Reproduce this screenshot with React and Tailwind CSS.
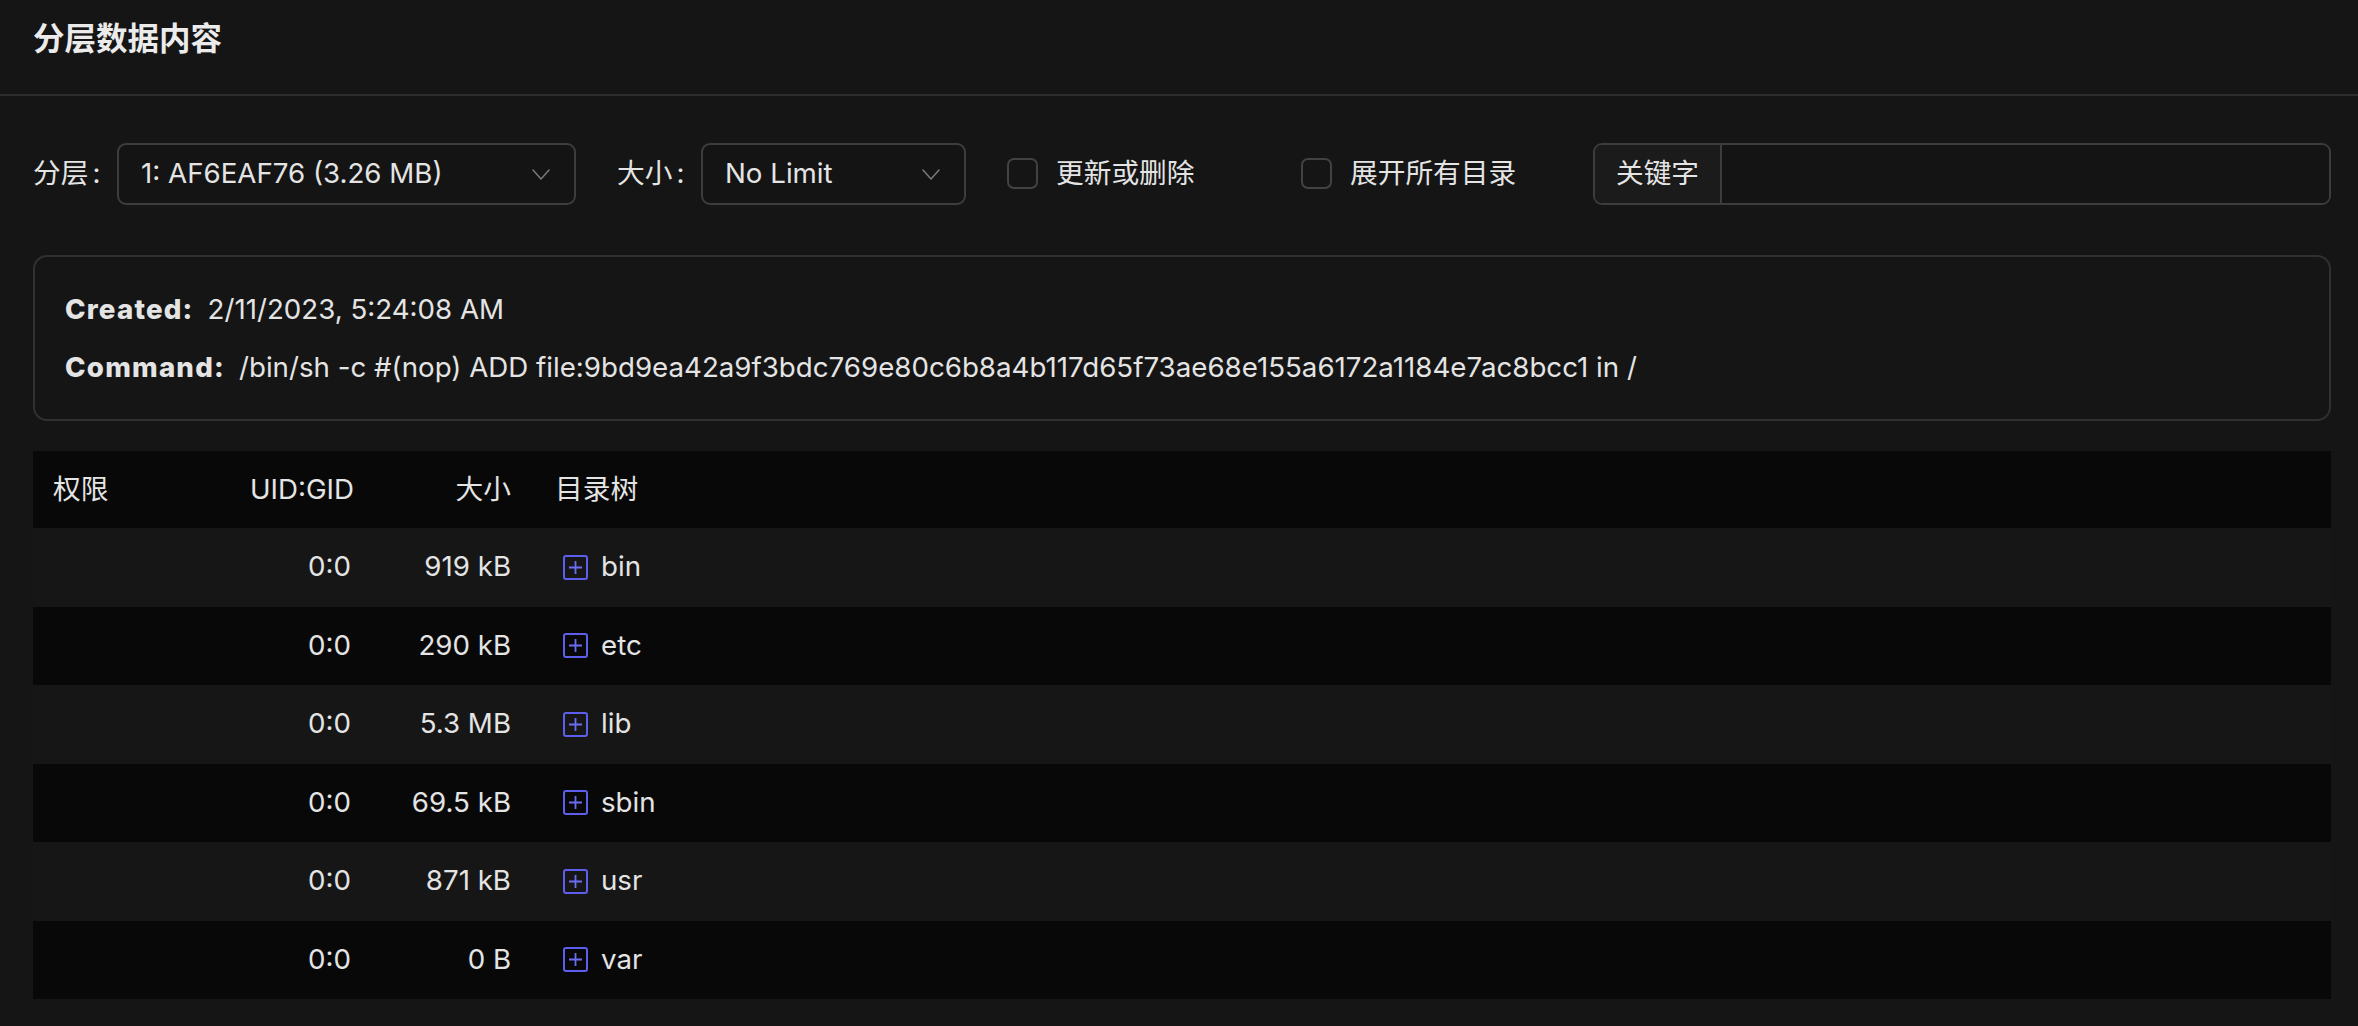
import { useState } from 'react'

const FONT = { fontFamily: '"Inter", "Noto Sans CJK SC", sans-serif' }

const rows = [
  { uid: '0:0', size: '919 kB', name: 'bin' },
  { uid: '0:0', size: '290 kB', name: 'etc' },
  { uid: '0:0', size: '5.3 MB', name: 'lib' },
  { uid: '0:0', size: '69.5 kB', name: 'sbin' },
  { uid: '0:0', size: '871 kB', name: 'usr' },
  { uid: '0:0', size: '0 B', name: 'var' },
]

function Chevron() {
  return (
    <svg width="18" height="11" viewBox="0 0 18 11" fill="none" className="shrink-0">
      <path d="M1 1l8 9 8-9" stroke="#7a7a7a" strokeWidth="1.5" strokeLinecap="round" strokeLinejoin="round" />
    </svg>
  )
}

function Select({ value, className }) {
  return (
    <div className={`h-[62px] flex items-center justify-between pl-[22px] pr-[24px] rounded-[9px] border-2 border-[#3d3d3d] bg-[#141414] ${className}`}>
      <span>{value}</span>
      <Chevron />
    </div>
  )
}

function Checkbox({ label, checked, onChange, className }) {
  return (
    <label className={`flex items-center cursor-pointer ${className}`}>
      <span
        onClick={onChange}
        className={`w-[31px] h-[31px] rounded-[7px] border-2 border-[#424242] ${checked ? 'bg-[#5b5bd6]' : ''}`}
      />
      <span className="ml-[18px]">{label}</span>
    </label>
  )
}

function PlusIcon() {
  return (
    <svg width="25" height="25" viewBox="0 0 25 25" fill="none" className="shrink-0">
      <rect x="1" y="1" width="23" height="23" rx="2" stroke="#5e5eec" strokeWidth="2" />
      <path d="M12.5 6v13M6 12.5h13" stroke="#6c6cf4" strokeWidth="1.8" />
    </svg>
  )
}

export default function App() {
  const [changed, setChanged] = useState(false)
  const [expand, setExpand] = useState(false)

  return (
    <div className="min-h-screen bg-[#151515] text-[#e4e4e4] text-[27.7px]" style={FONT}>
      <div className="h-[96px] pt-[19px] px-[33px] border-b-2 border-[#2d2d2d]">
        <h1 className="text-[31.5px] leading-[40px] font-semibold text-[#ebebeb]">分层数据内容</h1>
      </div>

      <div className="pl-[33px] pr-[27px] pb-[27px]">
        {/* filters */}
        <div className="mt-[47px] flex items-center h-[62px]">
          <span className="w-[84px] shrink-0">分层<span className="ml-[4px]">:</span></span>
          <Select value="1: AF6EAF76 (3.26 MB)" className="w-[459px] shrink-0" />
          <span className="ml-[41px] w-[84px] shrink-0">大小<span className="ml-[4px]">:</span></span>
          <Select value="No Limit" className="w-[265px] shrink-0" />
          <Checkbox label="更新或删除" checked={changed} onChange={() => setChanged(!changed)} className="ml-[41px] w-[294px] shrink-0" />
          <Checkbox label="展开所有目录" checked={expand} onChange={() => setExpand(!expand)} className="w-[292px] shrink-0" />
          <div className="flex-1 h-[62px] flex rounded-[9px] border-2 border-[#3d3d3d] overflow-hidden">
            <div className="w-[127px] flex items-center justify-center bg-[#1b1b1b] border-r-2 border-[#3d3d3d]">关键字</div>
            <input className="flex-1 bg-[#141414] outline-none px-4" />
          </div>
        </div>

        {/* layer info */}
        <div className="mt-[50px] h-[166px] rounded-[14px] border-2 border-[#303030] pl-[30px] pt-[34px] flex flex-col gap-[22px]">
          <div className="leading-[36px]">
            <span className="font-extrabold tracking-[1.2px]">Created:</span>
            <span className="ml-[14px]">2/11/2023, 5:24:08 AM</span>
          </div>
          <div className="leading-[36px]">
            <span className="font-extrabold tracking-[1.2px]">Command:</span>
            <span className="ml-[14px]">/bin/sh -c #(nop) ADD file:9bd9ea42a9f3bdc769e80c6b8a4b117d65f73ae68e155a6172a1184e7ac8bcc1 in /</span>
          </div>
        </div>

        {/* file tree */}
        <div className="mt-[30px]">
          <div className="h-[77px] flex items-center bg-[#080808]">
            <div className="w-[170px] pl-[20px]">权限</div>
            <div className="w-[171px] pr-[20px] text-right">UID:GID</div>
            <div className="w-[157px] pr-[20px] text-right">大小</div>
            <div className="flex-1 pl-[24px]">目录树</div>
          </div>
          {rows.map((r, i) => (
            <div key={r.name} className={`h-[78.5px] flex items-center ${i % 2 === 0 ? 'bg-[#161616]' : 'bg-[#080808]'}`}>
              <div className="w-[170px] pl-[20px]"></div>
              <div className="w-[171px] pr-[23px] text-right">{r.uid}</div>
              <div className="w-[157px] pr-[20px] text-right">{r.size}</div>
              <div className="flex-1 pl-[32px] flex items-center gap-[13px]">
                <PlusIcon />
                <span>{r.name}</span>
              </div>
            </div>
          ))}
        </div>
      </div>
    </div>
  )
}
